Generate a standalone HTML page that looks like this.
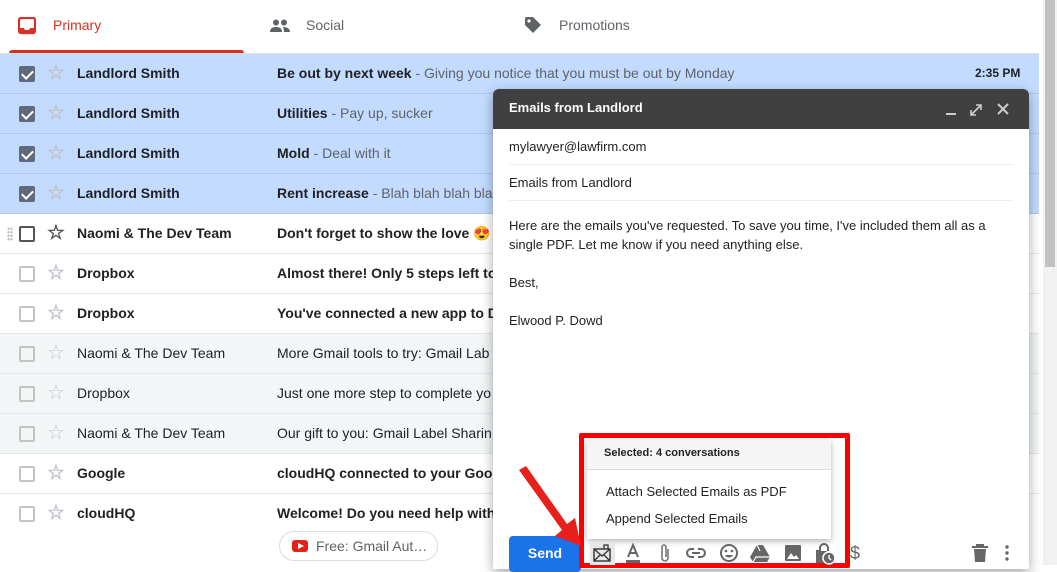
<!DOCTYPE html>
<html><head><style>
*{box-sizing:border-box;margin:0;padding:0}
body{width:1057px;height:565px;overflow:hidden;background:#fff;font-family:"Liberation Sans",Arial,sans-serif;position:relative;color:#202124}
.tab{position:absolute;top:0;height:54px;font-size:14px;line-height:50px}
.row{position:absolute;left:0;width:1039px;height:40px;border-bottom:1px solid #e5e7ea;font-size:14px;line-height:38px}
.sel{background:#c2dbff;border-bottom-color:#aec8ec}
.read{background:#f2f6f7}
.cb{position:absolute;left:19px;top:12px;width:16px;height:16px;border:2px solid #c4c4c4;border-radius:2px}
.sel .cb{background:#5f6b7c;border-color:#5f6b7c}
.sel .cb:after{content:"";position:absolute;left:3px;top:0px;width:5px;height:9px;border:solid #fff;border-width:0 2px 2px 0;transform:rotate(45deg)}
.star{position:absolute;left:47px;top:0;color:#c0c4cb;font-size:20px}
.name{position:absolute;left:77px;top:0}
.subj{position:absolute;left:277px;top:0;white-space:nowrap}
.b{font-weight:bold}
.sn{color:#5f6368}
.compose{position:absolute;left:493px;top:89px;width:536px;height:480px;background:#fff;box-shadow:0 4px 12px rgba(0,0,0,.35);border-radius:6px 6px 0 0}
.hdr{height:40px;background:#404040;color:#fff;font-weight:bold;font-size:13px;line-height:38px;padding-left:16px;border-radius:6px 6px 0 0}
.fld{margin:0 16px;height:36px;border-bottom:1px solid #eceff1;font-size:13px;line-height:36px;color:#222}
.body{padding:15px 16px;font-size:13px;line-height:19px;color:#222}
.ic{position:absolute;top:543px}
</style></head><body>
<div class="tab" style="left:18px;color:#d93025"><svg width="18" height="18" viewBox="0 0 18 18" style="position:absolute;top:17px"><rect x="1" y="1" width="16" height="15" rx="2" fill="none" stroke="#d93025" stroke-width="2.2"/><path d="M1 11h5l1 2h4l1-2h5v5H1z" fill="#d93025"/></svg><span style="position:absolute;left:35px">Primary</span></div>
<div style="position:absolute;left:9px;top:50px;width:235px;height:4px;background:#d93025;border-radius:3px 3px 0 0"></div>
<div class="tab" style="left:270px;color:#5f6368"><svg width="20" height="14" viewBox="0 0 20 14" style="position:absolute;top:19px"><circle cx="6" cy="3.5" r="3" fill="#5f6368"/><circle cx="14" cy="3.5" r="3" fill="#5f6368"/><path d="M0 13c0-4 3-5 6-5s6 1 6 5zM13 8c3 0 7 1 7 5h-6c0-2-0.5-3.5-1-5z" fill="#5f6368"/></svg><span style="position:absolute;left:36px">Social</span></div>
<div class="tab" style="left:524px;color:#5f6368"><svg width="18" height="18" viewBox="0 0 18 18" style="position:absolute;top:16px"><path d="M1 2v7l8 8 8-8-8-8H2z" fill="#5f6368"/><circle cx="5" cy="5" r="1.6" fill="#fff"/></svg><span style="position:absolute;left:35px">Promotions</span></div>
<div style="position:absolute;left:0;top:53px;width:1039px;height:1px;background:#e0e0e0"></div>
<div style="position:absolute;left:1043px;top:0;width:14px;height:565px;background:#f1f1f1"></div>
<div style="position:absolute;left:1045px;top:0;width:10px;height:267px;background:#c1c1c1"></div>

<div class="row sel b" style="top:54px"><div class="cb"></div><div class="star">☆</div><div class="name">Landlord Smith</div><div class="subj">Be out by next week <span class="sn" style="font-weight:normal">- Giving you notice that you must be out by Monday</span></div><div style="position:absolute;left:975px;font-size:12px">2:35 PM</div></div>
<div class="row sel b" style="top:94px"><div class="cb"></div><div class="star">☆</div><div class="name">Landlord Smith</div><div class="subj">Utilities <span class="sn" style="font-weight:normal">- Pay up, sucker</span></div></div>
<div class="row sel b" style="top:134px"><div class="cb"></div><div class="star">☆</div><div class="name">Landlord Smith</div><div class="subj">Mold <span class="sn" style="font-weight:normal">- Deal with it</span></div></div>
<div class="row sel b" style="top:174px"><div class="cb"></div><div class="star">☆</div><div class="name">Landlord Smith</div><div class="subj">Rent increase <span class="sn" style="font-weight:normal">- Blah blah blah blah</span></div></div>
<div class="row b" style="top:214px"><div style="position:absolute;left:7px;top:13px;width:6px;height:14px;background:radial-gradient(circle,#bbb 1px,transparent 1.3px) 0 0/3px 3.5px"></div><div class="cb" style="border-color:#555"></div><div class="star" style="color:#555">☆</div><div class="name">Naomi &amp; The Dev Team</div><div class="subj">Don't forget to show the love 😍 - I</div></div>
<div class="row b" style="top:254px"><div class="cb"></div><div class="star">☆</div><div class="name">Dropbox</div><div class="subj">Almost there! Only 5 steps left to</div></div>
<div class="row b" style="top:294px"><div class="cb"></div><div class="star">☆</div><div class="name">Dropbox</div><div class="subj">You've connected a new app to Dr</div></div>
<div class="row read" style="top:334px"><div class="cb"></div><div class="star">☆</div><div class="name">Naomi &amp; The Dev Team</div><div class="subj">More Gmail tools to try: Gmail Lab</div></div>
<div class="row read" style="top:374px"><div class="cb"></div><div class="star">☆</div><div class="name">Dropbox</div><div class="subj">Just one more step to complete yo</div></div>
<div class="row read" style="top:414px"><div class="cb"></div><div class="star">☆</div><div class="name">Naomi &amp; The Dev Team</div><div class="subj">Our gift to you: Gmail Label Sharin</div></div>
<div class="row b" style="top:454px"><div class="cb"></div><div class="star">☆</div><div class="name">Google</div><div class="subj">cloudHQ connected to your Googl</div></div>
<div class="row b" style="top:494px;height:71px;border:none"><div class="cb"></div><div class="star">☆</div><div class="name">cloudHQ</div><div class="subj">Welcome! Do you need help with C</div></div>
<div style="position:absolute;left:279px;top:531px;width:159px;height:30px;border:1px solid #dadce0;border-radius:15px;font-size:14px;line-height:28px;color:#5f6368;padding-left:36px">Free: Gmail Aut…<div style="position:absolute;left:12px;top:8px;width:16px;height:12px;background:#e62117;border-radius:3px"></div><div style="position:absolute;left:18px;top:11px;border-left:6px solid #fff;border-top:3px solid transparent;border-bottom:3px solid transparent"></div></div>

<div class="compose">
<div class="hdr">Emails from Landlord
<svg style="position:absolute;right:14px;top:12px" width="70" height="16" viewBox="0 0 70 16"><path d="M1 13h10" stroke="#ccc" stroke-width="2"/><path d="M26 14l10-10M31 4h5v5M26 9v5h5" stroke="#ccc" stroke-width="1.6" fill="none"/><path d="M53 3l10 10M63 3l-10 10" stroke="#ccc" stroke-width="2"/></svg></div>
<div class="fld">mylawyer@lawfirm.com</div>
<div class="fld">Emails from Landlord</div>
<div class="body">Here are the emails you've requested. To save you time, I've included them all as a single PDF. Let me know if you need anything else.<br><br>Best,<br><br>Elwood P. Dowd</div>
</div>
<div style="position:absolute;left:509px;top:536px;width:72px;height:36px;background:#1a73e8;border-radius:4px;color:#fff;font-weight:bold;font-size:14px;line-height:34px;text-align:center">Send</div>
<div style="position:absolute;left:579px;top:433px;width:271px;height:135px;border:5px solid #f00;border-radius:2px"></div>
<div style="position:absolute;left:587px;top:440px;width:244px;height:99px;background:#fff;box-shadow:0 2px 6px rgba(0,0,0,.3);font-size:13px;color:#222">
<div style="height:30px;background:#f5f5f5;font-size:11px;font-weight:bold;line-height:26px;padding-left:17px;border-bottom:1px solid #ddd">Selected: 4 conversations</div>
<div style="position:absolute;left:19px;top:44px">Attach Selected Emails as PDF</div>
<div style="position:absolute;left:19px;top:71px">Append Selected Emails</div>
</div>
<svg style="position:absolute;left:515px;top:466px" width="75" height="85"><path d="M4 4 L11 0 L52 58 L60 52 L66 80 L40 70 L47 64 Z" fill="#e8201b"/></svg>
<div style="position:absolute;left:590px;top:543px;width:25px;height:22px;background:#e8e8e8"></div>
<svg class="ic" style="left:592px" width="20" height="20" viewBox="0 0 20 20"><rect x="2" y="6" width="16" height="12" fill="none" stroke="#333" stroke-width="1.4"/><path d="M2 6l8 7 8-7M2 18l6-6M18 18l-6-6M12 6V2h4v4" stroke="#333" stroke-width="1.3" fill="none"/></svg>
<svg class="ic" style="left:623px" width="20" height="20" viewBox="0 0 20 20"><path d="M5 14L10 2l5 12M7 10h6" stroke="#666" stroke-width="2" fill="none"/><rect x="3" y="17" width="14" height="3" fill="#666"/></svg>
<svg class="ic" style="left:655px" width="20" height="20" viewBox="0 0 20 20"><path d="M13 6v9a3 3 0 01-6 0V4a2 2 0 014 0v10" stroke="#777" stroke-width="1.6" fill="none"/></svg>
<svg class="ic" style="left:686px" width="20" height="20" viewBox="0 0 20 20"><path d="M8 6H5a4 4 0 000 8h3M12 6h3a4 4 0 010 8h-3M6 10h8" stroke="#666" stroke-width="2" fill="none"/></svg>
<svg class="ic" style="left:719px" width="20" height="20" viewBox="0 0 20 20"><circle cx="10" cy="10" r="8" stroke="#666" stroke-width="2" fill="none"/><circle cx="7" cy="8" r="1.3" fill="#666"/><circle cx="13" cy="8" r="1.3" fill="#666"/><path d="M6 12a4.5 4.5 0 008 0z" fill="#666"/></svg>
<svg class="ic" style="left:750px" width="20" height="20" viewBox="0 0 20 20"><path d="M7 2h6l7 12-3 5H3l-3-5z" fill="#666"/><path d="M7 2l3 6M3 19l3-5h14" stroke="#fff" stroke-width="1.2" fill="none"/></svg>
<svg class="ic" style="left:783px" width="20" height="20" viewBox="0 0 20 20"><rect x="2" y="2" width="16" height="16" rx="1" fill="#666"/><path d="M4 16l4-6 3 4 2-2 3 4z" fill="#fff"/></svg>
<svg class="ic" style="left:814px" width="22" height="22" viewBox="0 0 22 22"><path d="M3 20V8h3V5a4 4 0 018 0v3" stroke="#666" stroke-width="2" fill="none"/><path d="M3 8h10v12H3z" fill="#666"/><circle cx="15" cy="15" r="6" fill="#666" stroke="#fff" stroke-width="1.5"/><path d="M15 12v3l2 2" stroke="#fff" stroke-width="1.4" fill="none"/></svg>
<div style="position:absolute;left:850px;top:543px;color:#666;font-size:18px">$</div>
<svg class="ic" style="left:971px" width="18" height="20" viewBox="0 0 18 20"><path d="M1 4h16M6 4V2h6v2" stroke="#666" stroke-width="2" fill="none"/><path d="M3 6h12l-1 13H4z" fill="#666"/></svg>
<svg class="ic" style="left:1004px" width="6" height="20" viewBox="0 0 6 20"><circle cx="3" cy="4" r="1.7" fill="#666"/><circle cx="3" cy="10" r="1.7" fill="#666"/><circle cx="3" cy="16" r="1.7" fill="#666"/></svg>
</body></html>
